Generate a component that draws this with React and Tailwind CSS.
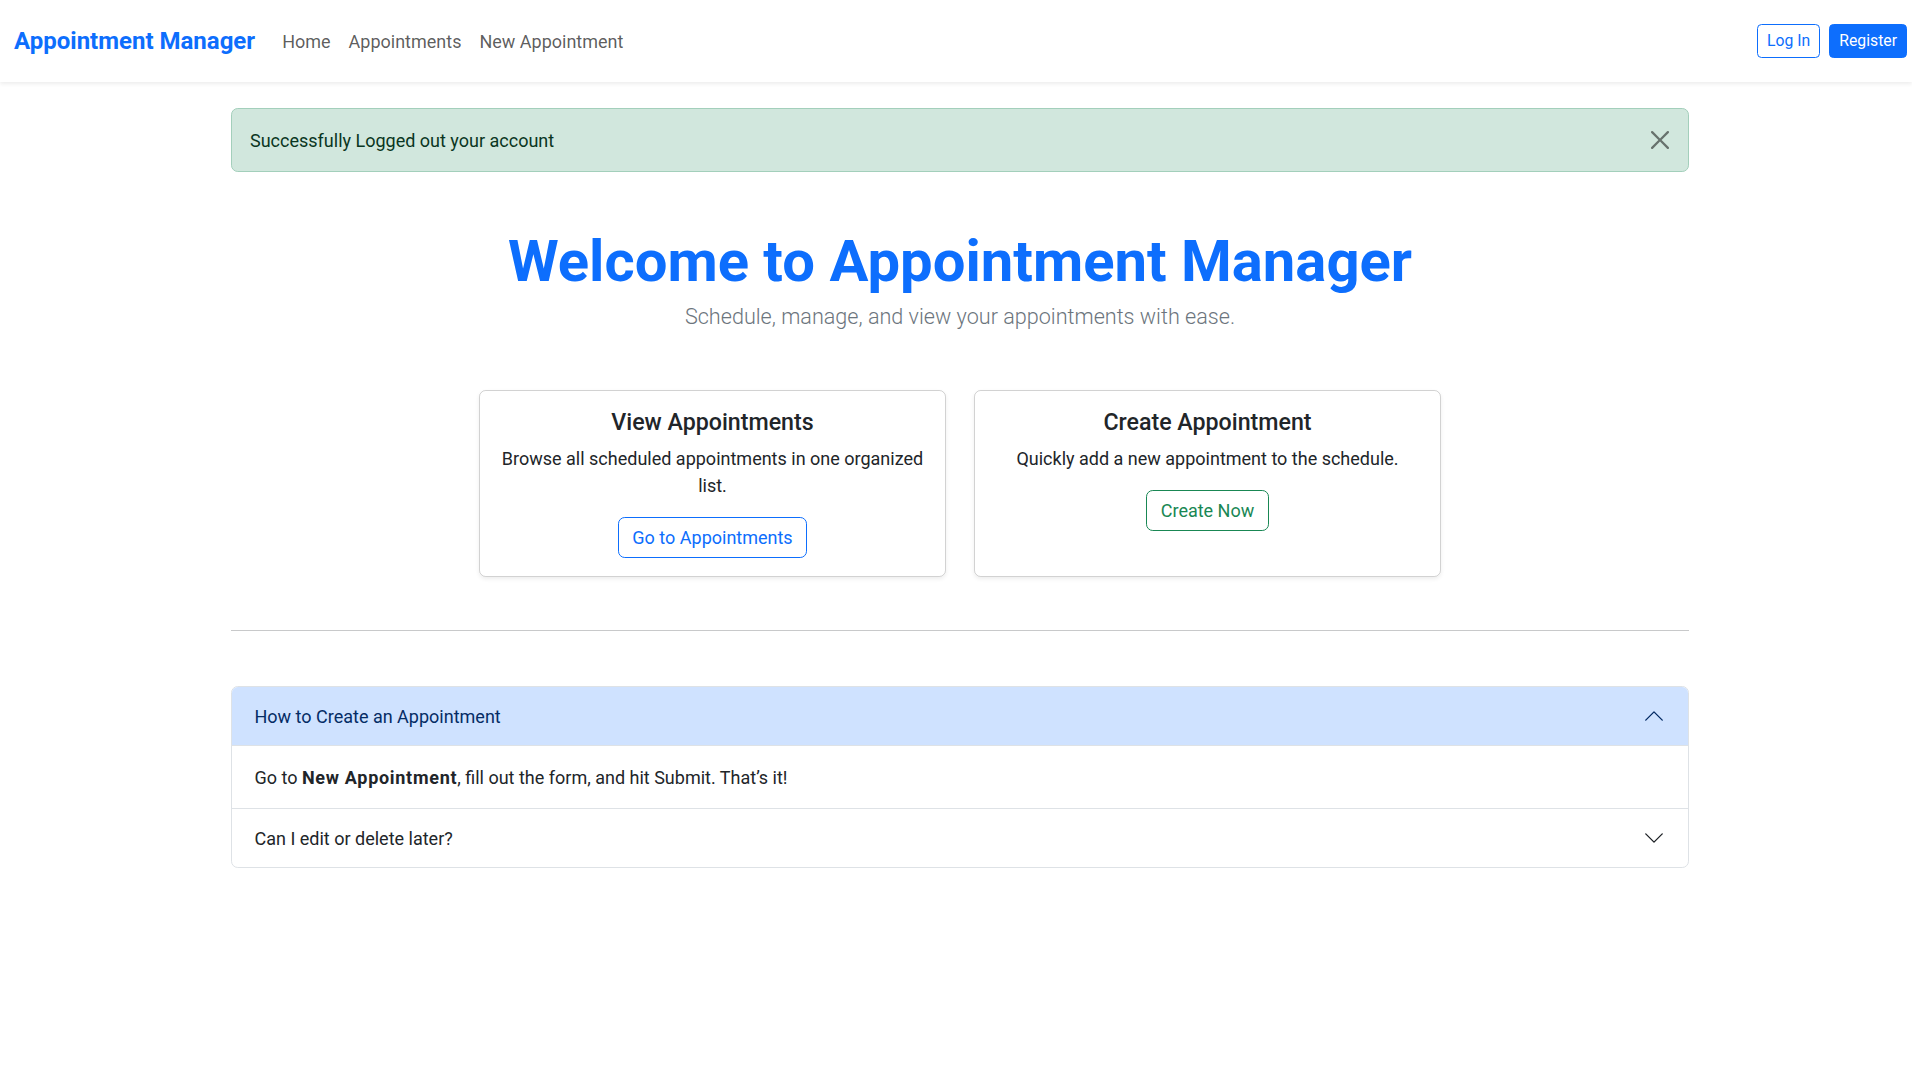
import React from "react";

function Chevron({ up, color }) {
  return (
    <svg width="22" height="22" viewBox="0 0 16 16" className={up ? "rotate-180" : ""}>
      <path d="M2 5L8 11L14 5" fill="none" stroke={color} strokeWidth="1" strokeLinecap="round" strokeLinejoin="round" />
    </svg>
  );
}

export default function App() {
  return (
    <div className="min-h-[1078px] bg-white text-[#212529] font-['Roboto',sans-serif] text-[18px]">
      <nav className="h-[82px] bg-white shadow-[0_2px_4px_rgba(0,0,0,0.075)] flex items-center justify-between pl-[14px] pr-[5px]">
        <div className="flex items-center">
          <span className="text-[24px] font-bold text-[#0d6efd] mr-[18px]">Appointment Manager</span>
          <div className="flex text-[18px] text-[rgba(0,0,0,0.65)]">
            <span className="px-[9px]">Home</span>
            <span className="px-[9px]">Appointments</span>
            <span className="px-[9px]">New Appointment</span>
          </div>
        </div>
        <div className="flex items-center gap-[9px] text-[15.75px]">
          <span className="h-[34px] flex items-center px-[9px] border border-[#0d6efd] text-[#0d6efd] rounded-[4.5px]">Log In</span>
          <span className="h-[34px] flex items-center px-[9px] border border-[#0d6efd] bg-[#0d6efd] text-white rounded-[4.5px]">Register</span>
        </div>
      </nav>

      <main className="w-[1458px] ml-[231px]">
        <div className="mt-[26px] h-[64px] flex items-center justify-between pl-[18px] pr-[19px] border border-[#a3cfbb] bg-[#d1e7dd] rounded-[6.75px] text-[#0a3622]">
          <span>Successfully Logged out your account</span>
          <svg width="18" height="18" viewBox="0 0 16 16" className="opacity-50">
            <path d="M.293.293a1 1 0 0 1 1.414 0L8 6.586 14.293.293a1 1 0 1 1 1.414 1.414L9.414 8l6.293 6.293a1 1 0 0 1-1.414 1.414L8 9.414l-6.293 6.293a1 1 0 0 1-1.414-1.414L6.586 8 .293 1.707a1 1 0 0 1 0-1.414z" fill="#000" />
          </svg>
        </div>

        <div className="mt-[57px] text-center">
          <h1 className="text-[58px] font-bold leading-[65px] text-[#0d6efd]">Welcome to Appointment Manager</h1>
          <p className="mt-[6px] text-[21.6px] leading-[34px] font-light text-[#6c757d]">Schedule, manage, and view your appointments with ease.</p>
        </div>

        <div className="mt-[56px] flex justify-center gap-[28px]">
          <div className="w-[467px] border border-[rgba(0,0,0,0.175)] rounded-[6.75px] shadow-[0_2px_4px_rgba(0,0,0,0.075)] p-[18px] text-center">
            <h5 className="text-[23.2px] font-medium leading-[27px] mb-[9px]">View Appointments</h5>
            <p className="leading-[27px] mb-[18px]">Browse all scheduled appointments in one organized list.</p>
            <span className="inline-block border border-[#0d6efd] text-[#0d6efd] rounded-[6.75px] px-[13.5px] py-[6px] leading-[27px]">Go to Appointments</span>
          </div>
          <div className="w-[467px] border border-[rgba(0,0,0,0.175)] rounded-[6.75px] shadow-[0_2px_4px_rgba(0,0,0,0.075)] p-[18px] text-center">
            <h5 className="text-[23.2px] font-medium leading-[27px] mb-[9px]">Create Appointment</h5>
            <p className="leading-[27px] mb-[18px]">Quickly add a new appointment to the schedule.</p>
            <span className="inline-block border border-[#198754] text-[#198754] rounded-[6.75px] px-[13.5px] py-[6px] leading-[27px]">Create Now</span>
          </div>
        </div>

        <hr className="mt-[53px] border-0 border-t border-[#c8c9ca]" />

        <div className="mt-[55px] border border-[#dee2e6] rounded-[6.75px] overflow-hidden">
          <div className="h-[59px] bg-[#cfe2ff] text-[#052c65] flex items-center justify-between pl-[22.5px] pr-[23px] border-b border-[#dee2e6]">
            <span>How to Create an Appointment</span>
            <Chevron up color="#052c65" />
          </div>
          <div className="h-[63px] flex items-center px-[22.5px] border-b border-[#dee2e6]">
            <span>Go to <strong className="font-bold tracking-[0.7px]">New Appointment</strong>, fill out the form, and hit Submit. That’s it!</span>
          </div>
          <div className="h-[58px] flex items-center justify-between pl-[22.5px] pr-[23px]">
            <span>Can I edit or delete later?</span>
            <Chevron color="#212529" />
          </div>
        </div>
      </main>
    </div>
  );
}
